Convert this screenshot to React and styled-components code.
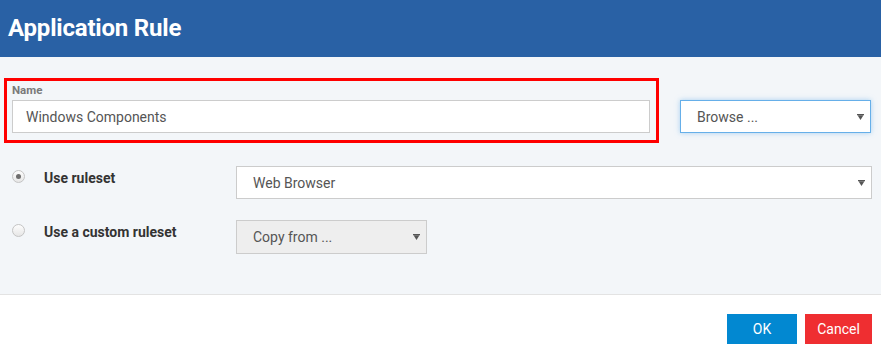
import React from "react";
import styled, { createGlobalStyle } from "styled-components";

const GlobalStyle = createGlobalStyle`
  html, body {
    margin: 0;
    padding: 0;
    background: #fff;
    font-family: Roboto, "Liberation Sans", Arial, sans-serif;
  }
  * { box-sizing: border-box; }
`;

const Arrow = () => (
  <svg width="7" height="6" viewBox="0 0 7 6">
    <rect x="0" y="0" width="7" height="1.2" fill="#555" />
    <polygon points="0.5,1.2 6.5,1.2 3.5,6" fill="#555" />
  </svg>
);

const App = () => {
  return (
    <Dialog>
      <GlobalStyle />
      <Header>
        <Title>Application Rule</Title>
      </Header>

      <Body>
        <NameRow>
          <NameBox>
            <FieldLabel>Name</FieldLabel>
            <TextInput>Windows Components</TextInput>
          </NameBox>
          <Select width="191px" focused>
            <span>Browse ...</span>
            <Arrow />
          </Select>
        </NameRow>

        <OptionRow>
          <Radio checked />
          <OptionLabel>Use ruleset</OptionLabel>
          <Select grow>
            <span>Web Browser</span>
            <Arrow />
          </Select>
        </OptionRow>

        <OptionRow gap="21px">
          <Radio />
          <OptionLabel>Use a custom ruleset</OptionLabel>
          <Select width="191px" disabled tall>
            <span>Copy from ...</span>
            <Arrow />
          </Select>
        </OptionRow>
      </Body>

      <Footer>
        <Button bg="#0288d1" width="70px">OK</Button>
        <Button bg="#ef2e31" width="67px">Cancel</Button>
      </Footer>
    </Dialog>
  );
};

const Dialog = styled.div`
  width: 881px;
  height: 356px;
  display: flex;
  flex-direction: column;
  overflow: hidden;
`;

const Header = styled.div`
  height: 57px;
  background: #2961a5;
  display: flex;
  align-items: center;
  padding: 0 8px 2px;
`;

const Title = styled.h1`
  margin: 0;
  color: #fff;
  font-size: 24px;
  font-weight: 700;
  letter-spacing: -0.2px;
`;

const Body = styled.div`
  height: 237px;
  background: #f3f6f9;
  padding: 21px 9px 0 4px;
`;

const NameRow = styled.div`
  display: flex;
  align-items: flex-end;
  gap: 21px;
`;

const NameBox = styled.div`
  width: 655px;
  height: 65px;
  border: 3px solid #f00;
  padding: 2px 6px 7px 5px;
  display: flex;
  flex-direction: column;
`;

const FieldLabel = styled.div`
  font-size: 11.5px;
  font-weight: 700;
  color: #7a7a7a;
  line-height: 14px;
  margin-bottom: 3px;
`;

const TextInput = styled.div`
  height: 33px;
  background: #fff;
  border: 1px solid #ccc;
  padding: 0 13px;
  display: flex;
  align-items: center;
  font-size: 14px;
  color: #555;
`;

const Select = styled.div`
  ${(p) => (p.grow ? "flex: 1;" : `width: ${p.width};`)}
  height: ${(p) => (p.tall ? "34px" : "33px")};
  margin-bottom: ${(p) => (p.focused ? "10px" : "0")};
  background: ${(p) => (p.disabled ? "#eee" : "#fff")};
  border: 1px solid ${(p) => (p.focused ? "#66afe9" : "#ccc")};
  box-shadow: ${(p) =>
    p.focused ? "0 0 5px rgba(102, 175, 233, 0.55)" : "none"};
  display: flex;
  align-items: center;
  justify-content: space-between;
  padding: 0 6px 0 16px;
  font-size: 14px;
  color: #555;
`;

const OptionRow = styled.div`
  display: flex;
  align-items: flex-start;
  margin-top: ${(p) => p.gap || "23px"};
`;

const Radio = styled.span`
  width: 13px;
  height: 13px;
  margin: 4px 0 0 8px;
  border-radius: 50%;
  border: 1px solid #c4c4c4;
  background: linear-gradient(#fdfdfd, #e6e6e6);
  display: flex;
  align-items: center;
  justify-content: center;

  &::after {
    content: "";
    width: 5px;
    height: 5px;
    border-radius: 50%;
    background: ${(p) => (p.checked ? "#6d6d6d" : "transparent")};
  }
`;

const OptionLabel = styled.div`
  width: 211px;
  padding: 2px 0 0 19px;
  line-height: 20px;
  font-size: 14px;
  font-weight: 700;
  color: #333;
`;

const Footer = styled.div`
  flex: 1;
  border-top: 1px solid #e3e3e3;
  background: #fff;
  display: flex;
  justify-content: flex-end;
  align-items: flex-start;
  gap: 8px;
  padding: 19px 9px 0 0;
`;

const Button = styled.button`
  width: ${(p) => p.width};
  height: 30px;
  border: none;
  background: ${(p) => p.bg};
  color: #fff;
  font-family: inherit;
  font-size: 14px;
  padding: 0;
`;

export default App;
